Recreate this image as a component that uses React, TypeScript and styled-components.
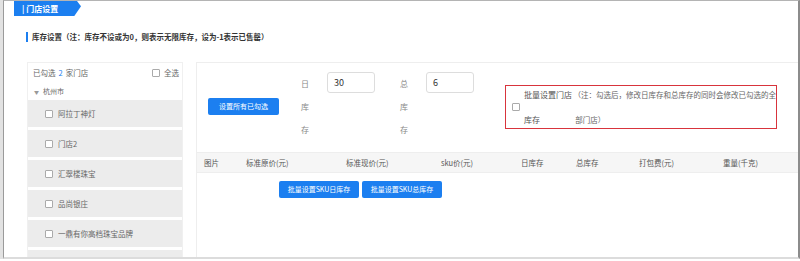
import React, { FC } from "react";
import styled, { createGlobalStyle } from "styled-components";

const GlobalStyle = createGlobalStyle`
  html, body {
    margin: 0;
    padding: 0;
    background: #fff;
    font-family: "Noto Sans CJK SC", "Noto Sans", sans-serif;
  }
  #root {
    width: 800px;
    height: 261px;
    overflow: hidden;
  }
`;

const blue = "#1c7ff0";

const Outer = styled.div`
  width: 800px;
  height: 259px;
  padding-left: 3px;
  background: #e2e2e2;
  box-sizing: border-box;
`;

const Frame = styled.div`
  height: 100%;
  background: #fff;
  border-left: 1px solid #9a9a9a;
  border-top: 1px solid #b4b4b4;
  border-right: 2px solid #8c8c8c;
  border-bottom: 2px solid #dcdcdc;
  box-sizing: border-box;
  display: flex;
  flex-direction: column;
`;

const Tab = styled.div`
  margin-left: 10px;
  width: 67px;
  height: 15px;
  background: ${blue};
  clip-path: polygon(0 0, 94% 0, 100% 35%, 90% 100%, 0 100%);
  color: #fff;
  font-size: 8px;
  font-weight: bold;
  line-height: 15px;
  padding-left: 8px;
  box-sizing: border-box;
`;

const Title = styled.div`
  margin: 15px 0 0 22px;
  display: flex;
  align-items: center;
  gap: 4px;
  font-size: 7.5px;
  font-weight: bold;
  color: #333;
  line-height: 12px;
`;

const TitleBar = styled.span`
  width: 2px;
  height: 10px;
  background: ${blue};
`;

const Panels = styled.div`
  margin: 19px 0 0 23px;
  flex: 1;
  display: flex;
  gap: 13px;
  min-height: 0;
`;

const Side = styled.div`
  width: 156px;
  border: 1px solid #f0f0f0;
  border-bottom: none;
  box-sizing: border-box;
  overflow: hidden;
  font-size: 7.5px;
  color: #666;
`;

const SideHead = styled.div`
  height: 19px;
  display: flex;
  align-items: center;
  justify-content: space-between;
  padding: 0 3px 0 5px;
`;

const Count = styled.span`
  color: ${blue};
  margin: 0 3px;
`;

const CheckLabel = styled.span`
  display: flex;
  align-items: center;
  gap: 4px;
`;

const Box = styled.span`
  width: 6px;
  height: 6px;
  border: 1px solid #aaa;
  border-radius: 1px;
  background: #fff;
  flex-shrink: 0;
`;

const City = styled.div`
  height: 18px;
  display: flex;
  align-items: center;
  gap: 4px;
  padding-left: 6px;
  font-size: 7px;
`;

const Caret = styled.span`
  font-size: 5px;
  color: #999;
`;

const Store = styled.div`
  height: 27px;
  margin-bottom: 3px;
  background: #ececec;
  display: flex;
  align-items: center;
  gap: 5px;
  padding-left: 17px;
`;

const Main = styled.div`
  flex: 1;
  border: 1px solid #eee;
  border-bottom: none;
  border-right: none;
  box-sizing: border-box;
`;

const Setter = styled.div`
  display: flex;
  align-items: center;
  padding: 9px 0 11px 11px;
`;

const Button = styled.div<{ $w: number }>`
  width: ${(p) => p.$w}px;
  height: 17px;
  background: ${blue};
  border-radius: 2px;
  color: #fff;
  font-size: 7px;
  line-height: 17px;
  text-align: center;
  white-space: nowrap;
`;

const Stack = styled.div<{ $ml: number }>`
  margin-left: ${(p) => p.$ml}px;
  width: 9px;
  font-size: 8px;
  line-height: 23px;
  color: #888;
  align-self: flex-start;
`;

const Field = styled.div`
  margin-left: 17px;
  align-self: flex-start;
  width: 48px;
  height: 21px;
  border: 1px solid #ddd;
  border-radius: 3px;
  box-sizing: border-box;
  padding-left: 6px;
  font-size: 9px;
  line-height: 19px;
  color: #333;
`;

const Notice = styled.div`
  margin-left: 31px;
  width: 272px;
  height: 44px;
  border: 1px solid #d8343c;
  box-sizing: border-box;
  display: flex;
  align-items: center;
  padding-left: 6px;
`;

const NoticeLabel = styled.div`
  margin-left: 4px;
  width: 50px;
  font-size: 8px;
  line-height: 25px;
  color: #555;
`;

const NoticeText = styled.div`
  font-size: 7.5px;
  line-height: 25px;
  color: #666;
  white-space: nowrap;
`;

const Head = styled.div`
  height: 21px;
  background: #f6f6f6;
  border-top: 1px solid #eee;
  border-bottom: 1px solid #eee;
  box-sizing: border-box;
  display: grid;
  grid-template-columns: 42px 100px 95px 80px 55px 63px 84px 1fr;
  align-items: center;
  padding-left: 7px;
  font-size: 7.5px;
  color: #555;
`;

const Actions = styled.div`
  display: flex;
  gap: 3px;
  margin-top: 8px;
  padding-left: 82px;
`;

const stores = ["阿拉丁神灯", "门店2", "汇翠楼珠宝", "品尚银庄", "一鼎有你高档珠宝品牌"];
const columns = ["图片", "标准原价(元)", "标准现价(元)", "sku价(元)", "日库存", "总库存", "打包费(元)", "重量(千克)"];

const App: FC = () => {
  return (
    <Outer>
      <GlobalStyle />
      <Frame>
        <Tab>| 门店设置</Tab>
        <Title>
          <TitleBar />
          库存设置（注：库存不设或为0，则表示无限库存，设为-1表示已售罄）
        </Title>
        <Panels>
          <Side>
            <SideHead>
              <span>
                已勾选<Count>2</Count>家门店
              </span>
              <CheckLabel>
                <Box />
                全选
              </CheckLabel>
            </SideHead>
            <City>
              <Caret>▼</Caret>
              杭州市
            </City>
            {stores.map((s) => (
              <Store key={s}>
                <Box />
                {s}
              </Store>
            ))}
            <Store />
          </Side>
          <Main>
            <Setter>
              <Button $w={71}>设置所有已勾选</Button>
              <Stack $ml={22}>
                日<br />库<br />存
              </Stack>
              <Field>30</Field>
              <Stack $ml={25}>
                总<br />库<br />存
              </Stack>
              <Field>6</Field>
              <Notice>
                <Box />
                <NoticeLabel>
                  批量设置门店
                  <br />
                  库存
                </NoticeLabel>
                <NoticeText>
                  （注：勾选后，修改日库存和总库存的同时会修改已勾选的全
                  <br />
                  &nbsp;部门店）
                </NoticeText>
              </Notice>
            </Setter>
            <Head>
              {columns.map((c) => (
                <span key={c}>{c}</span>
              ))}
            </Head>
            <Actions>
              <Button $w={80}>批量设置SKU日库存</Button>
              <Button $w={80}>批量设置SKU总库存</Button>
            </Actions>
          </Main>
        </Panels>
      </Frame>
    </Outer>
  );
};

export default App;
